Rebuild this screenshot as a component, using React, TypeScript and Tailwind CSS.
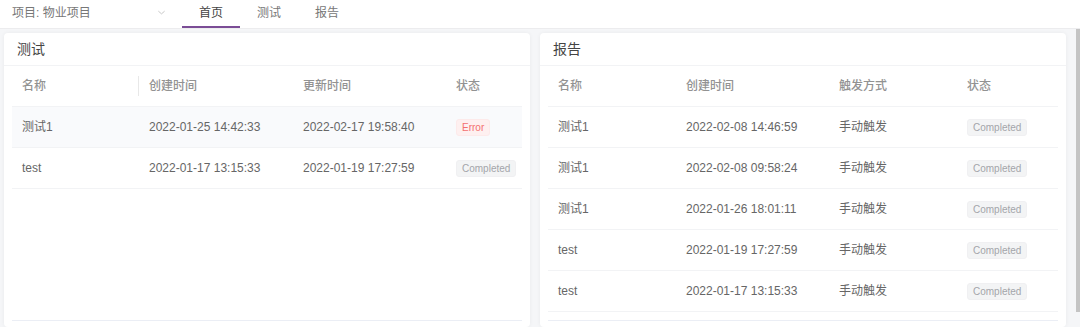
import { ReactNode } from 'react';

type Col = { key: string; title: string; width: number };

const TEST_COLS: Col[] = [
  { key: 'name', title: '名称', width: 127 },
  { key: 'created', title: '创建时间', width: 154 },
  { key: 'updated', title: '更新时间', width: 153 },
  { key: 'status', title: '状态', width: 76 },
];

const REPORT_COLS: Col[] = [
  { key: 'name', title: '名称', width: 128 },
  { key: 'created', title: '创建时间', width: 153 },
  { key: 'trigger', title: '触发方式', width: 128 },
  { key: 'status', title: '状态', width: 101 },
];

const TESTS = [
  { name: '测试1', created: '2022-01-25 14:42:33', updated: '2022-02-17 19:58:40', status: 'Error' },
  { name: 'test', created: '2022-01-17 13:15:33', updated: '2022-01-19 17:27:59', status: 'Completed' },
];

const REPORTS = [
  { name: '测试1', created: '2022-02-08 14:46:59', trigger: '手动触发', status: 'Completed' },
  { name: '测试1', created: '2022-02-08 09:58:24', trigger: '手动触发', status: 'Completed' },
  { name: '测试1', created: '2022-01-26 18:01:11', trigger: '手动触发', status: 'Completed' },
  { name: 'test', created: '2022-01-19 17:27:59', trigger: '手动触发', status: 'Completed' },
  { name: 'test', created: '2022-01-17 13:15:33', trigger: '手动触发', status: 'Completed' },
];

const StatusTag = ({ status }: { status: string }) =>
  status === 'Error' ? (
    <span className="inline-flex h-[17px] items-center rounded-[3px] border border-[#fdeaea] bg-[#fef0f0] px-[5px] text-[10px] text-[#f36f6f]">
      Error
    </span>
  ) : (
    <span className="inline-flex h-[17px] items-center rounded-[3px] border border-[#f0f0f2] bg-[#f3f4f5] px-[5px] text-[10px] text-[#a3a5aa]">
      {status}
    </span>
  );

interface DataTableProps {
  cols: Col[];
  rows: Record<string, string>[];
  showResizer?: boolean;
  hoverRow?: number;
}

const DataTable = ({ cols, rows, showResizer, hoverRow }: DataTableProps) => (
  <div className="mx-2 h-[255px] border-b border-[#ebeef5]">
    <div className="flex h-[41px] border-b border-[#f2f3f5]">
      {cols.map((col, i) => (
        <div
          key={col.key}
          style={{ width: col.width }}
          className="flex items-center justify-between pl-[10px] text-[12px] font-medium text-[#929292]"
        >
          <span>{col.title}</span>
          {showResizer && i === 0 && <span className="h-[20px] w-px bg-[#e8e8e8]" />}
        </div>
      ))}
    </div>
    {rows.map((row, r) => (
      <div
        key={r}
        className={`flex h-[41px] border-b border-[#f2f3f5] ${r === hoverRow ? 'bg-[#f9fafc]' : ''}`}
      >
        {cols.map((col) => (
          <div key={col.key} style={{ width: col.width }} className="flex items-center pl-[10px] text-[12px] text-[#666]">
            {col.key === 'status' ? <StatusTag status={row[col.key]} /> : row[col.key]}
          </div>
        ))}
      </div>
    ))}
  </div>
);

const Card = ({ title, children }: { title: string; children: ReactNode }) => (
  <section className="h-[294px] w-[526px] shrink-0 rounded-[4px] bg-white shadow-[0_0_4px_rgba(0,0,0,0.05)]">
    <div className="flex h-[33px] items-center border-b border-[#f2f3f5] pl-[13px] text-[14px] text-[#444]">{title}</div>
    {children}
  </section>
);

const TABS = ['首页', '测试', '报告'];

export default function App() {
  return (
    <div className="h-[327px] w-[1080px] overflow-hidden bg-[#f5f6f8] font-['Liberation_Sans','Noto_Sans_CJK_SC',sans-serif]">
      <header className="flex h-[29px] border-b border-[#ececee] bg-white">
        <div className="flex w-[172px] items-start justify-between pl-3 pr-[6px] pt-[4px] text-[12px] text-[#777]">
          <span>项目: 物业项目</span>
          <svg width="9" height="9" viewBox="0 0 10 10" className="mt-[4px]">
            <path d="M1.5 3.5 L5 6.5 L8.5 3.5" fill="none" stroke="#bbb" strokeWidth="0.9" />
          </svg>
        </div>
        <nav className="ml-[10px] flex">
          {TABS.map((tab, i) => (
            <div
              key={tab}
              className={`flex w-[58px] justify-center pt-[4px] text-[12px] ${
                i === 0 ? 'border-b-2 border-[#7b4d96] text-[#444]' : 'text-[#777]'
              }`}
            >
              {tab}
            </div>
          ))}
        </nav>
      </header>
      <div className="flex">
        <main className="flex w-[1076px] gap-[10px] pl-1 pt-1">
          <Card title="测试">
            <DataTable cols={TEST_COLS} rows={TESTS} showResizer hoverRow={0} />
          </Card>
          <Card title="报告">
            <DataTable cols={REPORT_COLS} rows={REPORTS} />
          </Card>
        </main>
        <div className="w-[4px]">
          <div className="h-[283px] bg-[#c4c4c4]" />
        </div>
      </div>
    </div>
  );
}
